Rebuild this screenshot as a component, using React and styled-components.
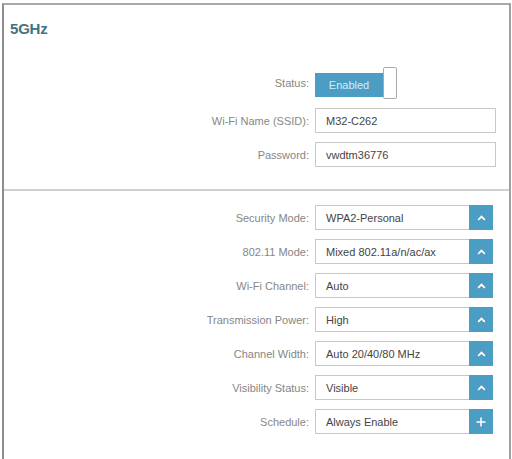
import React from "react";
import styled, { createGlobalStyle } from "styled-components";

const Global = createGlobalStyle`
  html, body { margin: 0; padding: 0; background: #fff; }
  body { font-family: "Liberation Sans", Arial, sans-serif; overflow: hidden; }
`;

const Frame = styled.div`
  box-sizing: border-box;
  margin: 3px 0 0 2px;
  width: 509px;
  height: 456px;
  border-top: 2px solid #a8a8a8;
  border-left: 2px solid #8e8e8e;
  border-right: 2px solid #a0a0a0;
  background: #fff;
`;

const Section = styled.div`
  padding: ${(p) => p.$pad};
`;

const Title = styled.h2`
  margin: 0 0 0 6px;
  font-size: 15px;
  line-height: 16px;
  font-weight: bold;
  color: #417384;
  letter-spacing: -0.2px;
`;

const Form = styled.div`
  display: flex;
  flex-direction: column;
  gap: 9px;
  margin-top: ${(p) => p.$top || 0}px;
`;

const Row = styled.div`
  display: flex;
  align-items: center;
  gap: 6px;
  height: ${(p) => p.$h || 25}px;
`;

const Label = styled.label`
  width: 305px;
  text-align: right;
  font-size: 11px;
  color: #868686;
  white-space: nowrap;
`;

const Input = styled.div`
  box-sizing: border-box;
  width: 181px;
  height: 25px;
  border: 1px solid #c8c8c8;
  padding-left: 10px;
  display: flex;
  align-items: center;
  font-size: 11px;
  color: #444;
`;

const Select = styled.div`
  display: flex;
  width: 178px;
  height: 25px;
`;

const SelectValue = styled.div`
  box-sizing: border-box;
  flex: 1;
  height: 25px;
  border: 1px solid #c8c8c8;
  border-right: none;
  padding-left: 10px;
  display: flex;
  align-items: center;
  font-size: 11px;
  color: #444;
`;

const SelectButton = styled.div`
  width: 24px;
  height: 25px;
  background: #4b9dc3;
  display: flex;
  align-items: center;
  justify-content: center;
`;

const Toggle = styled.div`
  display: flex;
  align-items: center;
`;

const ToggleOn = styled.div`
  width: 68px;
  height: 24px;
  background: #4b9dc3;
  color: #d6ecf5;
  font-size: 11px;
  display: flex;
  align-items: center;
  justify-content: center;
  margin-top: 3px;
`;

const Knob = styled.div`
  box-sizing: border-box;
  width: 14px;
  height: 32px;
  background: #fff;
  border: 1px solid #a9a9a9;
  border-radius: 2px;
`;

const Divider = styled.div`
  height: 2px;
  background: #cfcfcf;
`;

const Chevron = () => (
  <svg width="9" height="6" viewBox="0 0 9 6">
    <path d="M1.2 4.8 L4.5 1.6 L7.8 4.8" fill="none" stroke="#fff" strokeWidth="1.8" />
  </svg>
);

const Plus = () => (
  <svg width="10" height="10" viewBox="0 0 10 10">
    <path d="M5 0.5 V9.5 M0.5 5 H9.5" fill="none" stroke="#fff" strokeWidth="1.5" />
  </svg>
);

const selects = [
  ["Security Mode:", "WPA2-Personal"],
  ["802.11 Mode:", "Mixed 802.11a/n/ac/ax"],
  ["Wi-Fi Channel:", "Auto"],
  ["Transmission Power:", "High"],
  ["Channel Width:", "Auto 20/40/80 MHz"],
  ["Visibility Status:", "Visible"],
  ["Schedule:", "Always Enable", true],
];

export default function App() {
  return (
    <>
      <Global />
      <Frame>
        <Section $pad="16px 0 22px">
          <Title>5GHz</Title>
          <Form $top={30}>
            <Row $h={32}>
              <Label>Status:</Label>
              <Toggle>
                <ToggleOn>Enabled</ToggleOn>
                <Knob />
              </Toggle>
            </Row>
            <Row>
              <Label>Wi-Fi Name (SSID):</Label>
              <Input>M32-C262</Input>
            </Row>
            <Row>
              <Label>Password:</Label>
              <Input>vwdtm36776</Input>
            </Row>
          </Form>
        </Section>
        <Divider />
        <Section $pad="14px 0 20px">
          <Form>
            {selects.map(([label, value, plus]) => (
              <Row key={label}>
                <Label>{label}</Label>
                <Select>
                  <SelectValue>{value}</SelectValue>
                  <SelectButton>{plus ? <Plus /> : <Chevron />}</SelectButton>
                </Select>
              </Row>
            ))}
          </Form>
        </Section>
      </Frame>
    </>
  );
}
